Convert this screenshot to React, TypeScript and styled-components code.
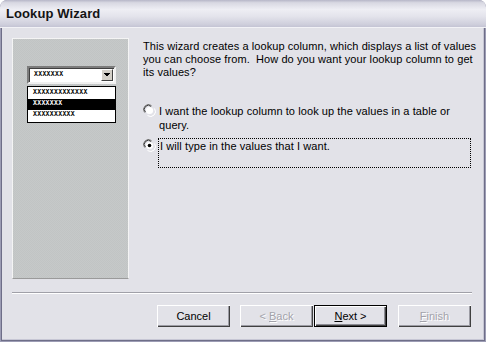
import React from 'react';
import styled, { createGlobalStyle } from 'styled-components';

const GlobalStyle = createGlobalStyle`
  html, body {
    margin: 0;
    padding: 0;
    background: #ffffff;
  }
  body {
    font-family: "Liberation Sans", Arial, sans-serif;
    font-size: 11px;
    color: #000;
  }
`;

const Window = styled.div`
  width: 486px;
  height: 342px;
  box-sizing: border-box;
  display: flex;
  flex-direction: column;
  border-radius: 7px 7px 0 0;
  overflow: hidden;
  background: #9c9cb4;
  padding: 0 1px 1px 1px;
`;

const TitleBar = styled.div`
  height: 27px;
  flex-shrink: 0;
  display: flex;
  align-items: center;
  padding: 0 0 0 6px;
  margin: 0 -1px;
  border-radius: 7px 7px 0 0;
  background: linear-gradient(#b6b6c8 0, #d8d8e2 10%, #eeeef4 35%, #e4e4ec 60%, #cfcfdc 90%, #c4c4d4 100%);
  border-bottom: 1px solid #f2f2f6;
  font-size: 13px;
  font-weight: bold;
  color: #141414;
  letter-spacing: 0.1px;
`;

const Frame = styled.div`
  flex: 1;
  display: flex;
  flex-direction: column;
  border: 1px solid #6e6e88;
  border-top: none;
  box-shadow: inset -1px -1px 0 #c6c6d4;
  background: #e2e2e8;
  padding: 10px 0 0 10px;
`;

const Main = styled.div`
  display: flex;
  height: 241px;
`;

const Picture = styled.div`
  width: 117px;
  height: 241px;
  flex-shrink: 0;
  box-sizing: border-box;
  border: 1px solid #f4f4f4;
  border-bottom-color: #9a9a9a;
  background-color: #c4c7c7;
  background-image: repeating-conic-gradient(#c6c9c9 0 25%, #c1c4c4 0 50%);
  background-size: 2px 2px;
  padding: 27px 0 0 14px;
  display: flex;
  flex-direction: column;
`;

const Combo = styled.div`
  width: 85px;
  height: 14px;
  display: flex;
  align-items: center;
  justify-content: space-between;
  background: #fff;
  border: 2px solid;
  border-color: #7c7c7c #f0f0f0 #f0f0f0 #7c7c7c;
  box-shadow: inset 1px 1px 0 #404040;
`;

const Dummy = styled.span<{ $light?: boolean }>`
  font-family: "Liberation Mono", monospace;
  font-size: 6.5px;
  font-weight: bold;
  letter-spacing: 0.3px;
  line-height: 1;
  color: ${p => (p.$light ? '#fff' : '#000')};
  padding-left: 5px;
`;

const DropButton = styled.div`
  width: 12px;
  height: 12px;
  margin-right: 1px;
  background: #d4d0c8;
  border: 1px solid;
  border-color: #fff #404040 #404040 #fff;
  box-sizing: border-box;
  display: flex;
  align-items: center;
  justify-content: center;
`;

const List = styled.div`
  margin-top: 2px;
  width: 87px;
  border: 1px solid #000;
  background: #fff;
  padding: 1px 0;
  display: flex;
  flex-direction: column;
`;

const ListRow = styled.div<{ $selected?: boolean }>`
  height: 11px;
  display: flex;
  align-items: center;
  background: ${p => (p.$selected ? '#000' : 'transparent')};
`;

const Content = styled.div`
  flex: 1;
  padding: 2px 0 0 14px;
  display: flex;
  flex-direction: column;
`;

const Intro = styled.p`
  margin: 0;
  line-height: 13px;
  font-size: 11px;
  letter-spacing: 0.08px;
`;

const Options = styled.div`
  margin-top: 25px;
  display: flex;
  flex-direction: column;
  gap: 7px;
`;

const Option = styled.div`
  display: flex;
  align-items: flex-start;
  gap: 3px;
`;

const RadioBox = styled.div`
  width: 13px;
  height: 13px;
  flex-shrink: 0;
`;

const Label = styled.div<{ $focused?: boolean }>`
  line-height: 14px;
  letter-spacing: 0.08px;
  ${p =>
    p.$focused
      ? `
    flex: 1;
    height: 30px;
    margin-right: 13px;
    border: 1px dotted #000;
    padding-left: 1px;
    margin-left: -1px;
    margin-top: -1px;
    box-sizing: border-box;
  `
      : ''}
`;

const Separator = styled.div`
  margin-top: 13px;
  margin-right: 12px;
  height: 1px;
  background: #a0a0a8;
  border-bottom: 1px solid #ffffff;
`;

const ButtonRow = styled.div`
  margin-top: 11px;
  display: flex;
  justify-content: flex-end;
  padding-right: 13px;
`;

const Button = styled.div<{ $disabled?: boolean; $default?: boolean; $gap?: number }>`
  width: 73px;
  height: 22px;
  box-sizing: border-box;
  margin-left: ${p => p.$gap ?? 0}px;
  display: flex;
  align-items: center;
  justify-content: center;
  font-size: 11px;
  background: #e2e2e8;
  color: ${p => (p.$disabled ? '#a2a2aa' : '#000')};
  text-shadow: ${p => (p.$disabled ? '1px 1px 0 #ffffff' : 'none')};
  border: ${p => (p.$default ? '1px solid #000' : '0')};
  box-shadow: ${p =>
    p.$default
      ? 'inset 1px 1px 0 #ffffff, inset -1px -1px 0 #404040, inset -2px -2px 0 #8c8c94'
      : 'inset 1px 1px 0 #ffffff, inset -1px -1px 0 #404040, inset -2px -2px 0 #9c9ca4'};
  & u {
    text-decoration: underline;
    text-underline-offset: 1px;
  }
`;

function Radio({ checked }: { checked?: boolean }) {
  return (
    <RadioBox>
      <svg width="13" height="13" viewBox="0 0 13 13">
        <path d="M1.5 8.5 A5 5 0 0 1 8.5 1.5" fill="none" stroke="#808080" strokeWidth="1" />
        <path d="M2.5 8.2 A4 4 0 0 1 8.2 2.5" fill="none" stroke="#404040" strokeWidth="1" />
        <path d="M4.5 11.5 A5 5 0 0 0 11.5 4.5" fill="none" stroke="#ffffff" strokeWidth="1" />
        <circle cx="6.5" cy="6.5" r="3.6" fill="#ffffff" />
        {checked && <circle cx="6.5" cy="6.5" r="1.8" fill="#000" />}
      </svg>
    </RadioBox>
  );
}

export default function App() {
  return (
    <>
      <GlobalStyle />
      <Window>
        <TitleBar>Lookup Wizard</TitleBar>
        <Frame>
          <Main>
            <Picture>
              <Combo>
                <Dummy>XXXXXXX</Dummy>
                <DropButton>
                  <svg width="6" height="4" viewBox="0 0 6 4">
                    <path d="M0 0h6v1H0zM1 1h4v1H1zM2 2h2v1H2z" fill="#000" />
                  </svg>
                </DropButton>
              </Combo>
              <List>
                <ListRow>
                  <Dummy>XXXXXXXXXXXXX</Dummy>
                </ListRow>
                <ListRow $selected>
                  <Dummy $light>XXXXXXX</Dummy>
                </ListRow>
                <ListRow>
                  <Dummy>XXXXXXXXXX</Dummy>
                </ListRow>
              </List>
            </Picture>
            <Content>
              <Intro>
                This wizard creates a lookup column, which displays a list of values
                <br />
                you can choose from.&nbsp; How do you want your lookup column to get
                <br />
                its values?
              </Intro>
              <Options>
                <Option>
                  <Radio />
                  <Label>
                    I want the lookup column to look up the values in a table or
                    <br />
                    query.
                  </Label>
                </Option>
                <Option>
                  <Radio checked />
                  <Label $focused>I will type in the values that I want.</Label>
                </Option>
              </Options>
            </Content>
          </Main>
          <Separator />
          <ButtonRow>
            <Button>Cancel</Button>
            <Button $disabled $gap={10}>
              &lt;&nbsp;<u>B</u>ack
            </Button>
            <Button $default $gap={1}>
              <u>N</u>ext &gt;
            </Button>
            <Button $disabled $gap={11}>
              <u>F</u>inish
            </Button>
          </ButtonRow>
        </Frame>
      </Window>
    </>
  );
}
